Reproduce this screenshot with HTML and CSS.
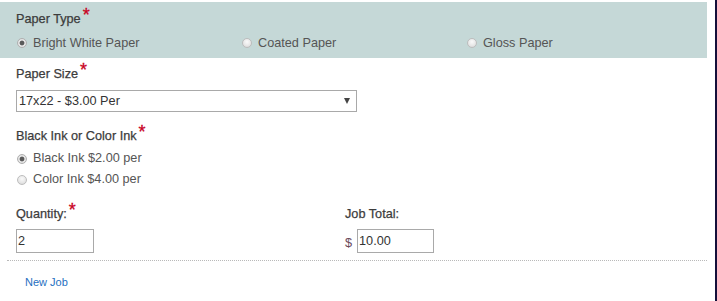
FILE: index.html
```html
<html lang="en">
  <head>
    <meta charset="UTF-8" />
    <meta name="viewport" content="width=device-width, initial-scale=1.0" />
    <title>Print Job</title>
    <link rel="stylesheet" href="styles.css">
  </head>
  <body>
    <div class="page">
      <form class="job-form">
        <!-- paper type -->
        <div class="band">
          <div class="label">Paper Type<span class="req">*</span></div>
          <div class="options-row">
            <label class="opt"><input type="radio" name="paper" checked /> Bright White Paper</label>
            <label class="opt"><input type="radio" name="paper" /> Coated Paper</label>
            <label class="opt"><input type="radio" name="paper" /> Gloss Paper</label>
          </div>
        </div>

        <div class="field">
          <div class="label">Paper Size<span class="req">*</span></div>
          <div class="select-wrap">
            <select class="size-select">
              <option>17x22 - $3.00 Per</option>
              <option>11x17 - $2.00 Per</option>
              <option>8.5x11 - $1.00 Per</option>
            </select>
          </div>
        </div>

        <div class="field ink">
          <div class="label">Black Ink or Color Ink<span class="req">*</span></div>
          <label class="opt stacked"><input type="radio" name="ink" checked /> Black Ink $2.00 per</label>
          <label class="opt stacked"><input type="radio" name="ink" /> Color Ink $4.00 per</label>
        </div>

        <div class="totals">
          <div>
            <div class="label">Quantity:<span class="req">*</span></div>
            <input class="box" type="text" value="2" />
          </div>
          <div>
            <div class="label">Job Total:</div>
            <div class="money"><span class="dollar">$</span><input class="box" type="text" value="10.00" /></div>
          </div>
        </div>
      </form>

      <div class="footer">
        <a href="javascript:;" class="new-job">New Job</a>
      </div>
    </div>
  </body>
</html>
```

FILE: styles.css
```css
* {
  margin: 0;
  padding: 0;
  box-sizing: border-box;
}
body {
  font-family: "Liberation Sans", Arial, sans-serif;
  font-size: 12.7px;
  color: #555;
  background: #fff;
}
.page {
  width: 717px;
  height: 301px;
  padding-top: 2px;
  border-right: 2px solid #14103a;
}
.job-form {
  width: 707px;
}
.label {
  color: #3c3c3c;
  line-height: 18px;
  -webkit-text-stroke: 0.25px #3c3c3c;
}
.req {
  color: #c8001e;
  font-size: 18px;
  line-height: 0;
  margin-left: 2px;
  vertical-align: 2px;
  -webkit-text-stroke: 0.3px #c8001e;
}

/* paper type band */
.band {
  background: #c5d8d7;
  padding: 8px 16px 6px;
}
.options-row {
  display: grid;
  grid-template-columns: 225px 225px 1fr;
  margin-top: 6px;
}
.opt {
  display: flex;
  align-items: center;
  gap: 6px;
  line-height: 18px;
  color: #555;
}
.opt input {
  appearance: none;
  width: 10px;
  height: 10px;
  border-radius: 50%;
  border: 1px solid #bdbdbd;
  background: radial-gradient(circle at 50% 35%, #fafafa 0%, #e6e6e6 60%, #d2d2d2 100%);
  margin-left: 1px;
  flex-shrink: 0;
}
.opt input:checked {
  background: radial-gradient(circle, #5a5a5a 0, #5a5a5a 2px, #e8e8e8 2.8px, #d8d8d8 100%);
  border-color: #b0b0b0;
}

.field {
  padding: 7px 16px 0;
}
.select-wrap {
  position: relative;
  width: 341px;
  margin-top: 7px;
}
.size-select {
  appearance: none;
  width: 341px;
  height: 22px;
  border: 1px solid #a9a9a9;
  border-radius: 0;
  background: #fff;
  font-family: inherit;
  font-size: 12.7px;
  color: #333;
  padding: 0 2px;
}
.select-wrap::after {
  content: "";
  position: absolute;
  right: 7px;
  top: 8px;
  border-left: 3.5px solid transparent;
  border-right: 3.5px solid transparent;
  border-top: 6px solid #444;
  pointer-events: none;
}

.ink {
  padding-top: 15px;
}
.ink .label {
  margin-bottom: 3px;
}
.stacked {
  line-height: 21px;
}

.totals {
  display: grid;
  grid-template-columns: 329px 1fr;
  padding: 15px 16px 7px;
}
.box {
  display: block;
  width: 78px;
  height: 24px;
  margin-top: 6px;
  border: 1px solid #a9a9a9;
  font-family: inherit;
  font-size: 12.7px;
  color: #333;
  padding: 0 1px;
  outline: none;
}
.money {
  display: flex;
  align-items: flex-end;
  gap: 5px;
}
.money .box {
  width: 77px;
}
.dollar {
  color: #6a4a5a;
  line-height: 20px;
}

.footer {
  width: 700px;
  margin-left: 7px;
  border-top: 1px dotted #b9b9b9;
  padding: 15px 0 0 18px;
}
.new-job {
  font-size: 11px;
  color: #1f6fbf;
  text-decoration: none;
}
```
